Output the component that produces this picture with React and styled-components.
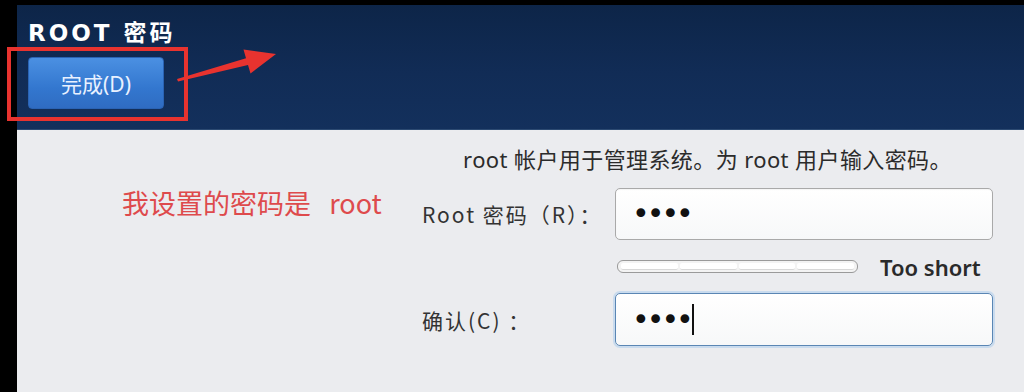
import React from "react";
import styled, { createGlobalStyle } from "styled-components";

const GlobalStyle = createGlobalStyle`
	body {
		margin: 0;
		background: #000;
		font-family: "Noto Sans", "Noto Sans CJK SC", sans-serif;
	}
`;

const Frame = styled.div`
	position: relative;
	width: 1024px;
	height: 392px;
	box-sizing: border-box;
	padding: 5px 0 0 17px;
	background: #000;
	display: flex;
	flex-direction: column;
	overflow: hidden;
`;

const Header = styled.header`
	height: 125px;
	box-sizing: border-box;
	padding: 15px 0 0 11px;
	background: linear-gradient(180deg, #0d2548 0%, #112c56 55%, #13305c 100%);
	border-bottom: 1px solid #2c4a72;
`;

const Title = styled.h1`
	margin: 0;
	font-family: "DejaVu Sans", "Noto Sans CJK SC", sans-serif;
	font-size: 23px;
	line-height: 27px;
	font-weight: 700;
	letter-spacing: 3px;
	color: #fff;
`;

const ButtonWrap = styled.div`
	position: relative;
	display: inline-block;
	margin-top: 10px;
`;

const Highlight = styled.span`
	position: absolute;
	top: -10px;
	left: -21px;
	right: -24px;
	bottom: -12px;
	border: 4px solid #e8332f;
	pointer-events: none;
`;

const DoneButton = styled.button`
	width: 136px;
	height: 52px;
	border: 1px solid #2a63b4;
	border-radius: 4px;
	background: linear-gradient(180deg, #4b90e2 0%, #3377cf 60%, #2f6cc2 100%);
	color: #e9f1ff;
	font-family: "Noto Sans", "Noto Sans CJK SC", sans-serif;
	font-size: 21px;
	cursor: pointer;
`;

const Arrow = styled.svg`
	position: absolute;
	left: 0;
	top: 0;
	pointer-events: none;
`;

const Content = styled.main`
	flex: 1;
	display: flex;
	background: #ebecef;
`;

const NotePane = styled.div`
	width: 388px;
	box-sizing: border-box;
	padding: 56px 0 0 105px;
`;

const Note = styled.p`
	margin: 0;
	font-family: "Noto Sans CJK SC", sans-serif;
	font-size: 27px;
	line-height: 34px;
	color: #de4a4c;
	white-space: pre;
`;

const Form = styled.div`
	width: 571px;
	margin-left: 17px;
	padding-top: 16px;
	display: grid;
	grid-template-columns: 193px 378px;
	grid-template-rows: 26px 52px 21px 53px;
	row-gap: 16px;
`;

const Instruction = styled.p`
	grid-column: 1 / -1;
	margin: 0;
	text-align: center;
	font-family: "Noto Sans", "Noto Sans CJK SC", sans-serif;
	font-size: 22px;
	line-height: 26px;
	letter-spacing: 0.4px;
	color: #2b2b2b;
	white-space: nowrap;
`;

const Label = styled.label`
	align-self: center;
	font-family: "Noto Sans CJK SC", sans-serif;
	font-size: 21px;
	letter-spacing: 2px;
	color: #333;
	white-space: pre;
`;

const Field = styled.div`
	display: flex;
	align-items: center;
	padding-left: 16px;
	border: 1px solid ${(p) => (p.focused ? "#5a86b4" : "#a9a9a9")};
	border-radius: 5px;
	background: linear-gradient(180deg, #ffffff 0%, #f7f8f9 100%);
	box-shadow: ${(p) =>
		p.focused ? "0 0 0 2px rgba(160, 200, 238, 0.45)" : "inset 0 1px 1px rgba(0,0,0,0.04)"};
`;

const Masked = styled.span`
	font-family: "DejaVu Sans", sans-serif;
	font-size: 30px;
	line-height: 30px;
	letter-spacing: -3px;
	color: #111;
`;

const Caret = styled.span`
	width: 2px;
	height: 31px;
	margin-left: 1px;
	background: #111;
`;

const StrengthRow = styled.div`
	grid-column: 2;
	display: flex;
	align-items: center;
	gap: 22px;
	padding-left: 2px;
`;

const Meter = styled.div`
	width: 241px;
	height: 13px;
	box-sizing: border-box;
	display: flex;
	gap: 2px;
	padding: 2px 3px;
	border: 1px solid #9a9a9a;
	border-radius: 6px;
	background: #f3f3f3;
`;

const Segment = styled.span`
	flex: 1;
	background: #fff;
	border-bottom: 1px solid #d8d8d8;
	border-radius: 2px;
`;

const StrengthLabel = styled.span`
	font-family: "Noto Sans", sans-serif;
	font-size: 22px;
	font-weight: 600;
	color: #2a2a2a;
`;

const App = () => {
	return (
		<>
			<GlobalStyle />
			<Frame>
				<Header>
					<Title>ROOT 密码</Title>
					<ButtonWrap>
						<DoneButton>完成(D)</DoneButton>
						<Highlight />
					</ButtonWrap>
				</Header>
				<Arrow width="300" height="100" viewBox="0 0 300 100">
					<polygon
						points="177,79 246,58.3 243.5,49.5 276,54 250.5,73.5 248,65.1 178,81.5"
						fill="#e8332f"
					/>
				</Arrow>
				<Content>
					<NotePane>
						<Note>{"我设置的密码是   root"}</Note>
					</NotePane>
					<Form>
						<Instruction>
							root 帐户用于管理系统。为 root 用户输入密码。
						</Instruction>
						<Label>Root 密码（R）：</Label>
						<Field>
							<Masked>••••</Masked>
						</Field>
						<StrengthRow>
							<Meter>
								{[0, 1, 2, 3].map((i) => (
									<Segment key={i} />
								))}
							</Meter>
							<StrengthLabel>Too short</StrengthLabel>
						</StrengthRow>
						<Label>{"确认(C) ："}</Label>
						<Field focused>
							<Masked>••••</Masked>
							<Caret />
						</Field>
					</Form>
				</Content>
			</Frame>
		</>
	);
};

export default App;
